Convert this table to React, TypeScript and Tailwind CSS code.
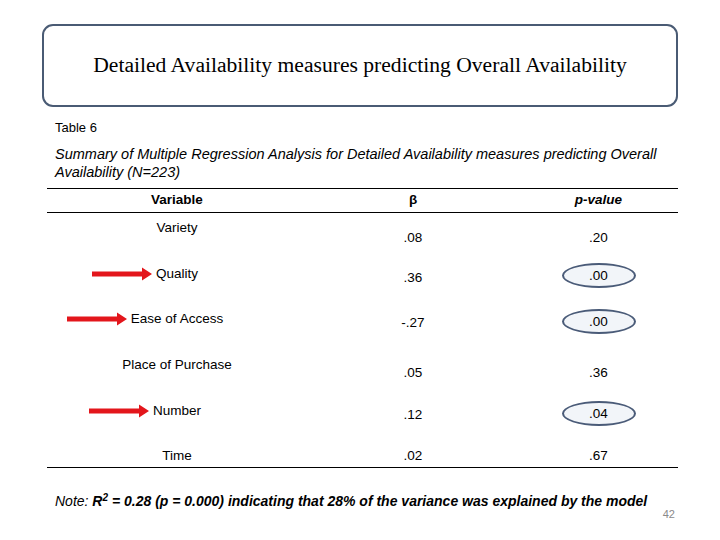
const rows = [
  { name: "Variety", beta: ".08", p: ".20", arrow: false, circled: false, h: "h-[46px]", lp: "pt-[6px]", vp: "pt-[16px]" },
  { name: "Quality", beta: ".36", p: ".00", arrow: true, circled: true, h: "h-[46px]", lp: "pt-[6px]", vp: "pt-[10px]" },
  { name: "Ease of Access", beta: "-.27", p: ".00", arrow: true, circled: true, h: "h-[46px]", lp: "pt-[5px]", vp: "pt-[9px]" },
  { name: "Place of Purchase", beta: ".05", p: ".36", arrow: false, circled: false, h: "h-[46px]", lp: "pt-[5px]", vp: "pt-[13px]" },
  { name: "Number", beta: ".12", p: ".04", arrow: true, circled: true, h: "h-[46px]", lp: "pt-[5px]", vp: "pt-[9px]" },
  { name: "Time", beta: ".02", p: ".67", arrow: false, circled: false, h: "h-[25px]", lp: "pt-[4px]", vp: "pt-[4px]" },
];

function Arrow() {
  return (
    <svg
      width="60"
      height="14"
      viewBox="0 0 60 14"
      className="absolute right-full top-[2px] mr-[4px] block"
    >
      <polygon points="0,4.5 50,4.5 50,0.5 60,7 50,13.5 50,9.5 0,9.5" fill="#e3161c" />
    </svg>
  );
}

export default function App() {
  return (
    <div className="relative h-[540px] w-[720px] overflow-hidden bg-white font-['Liberation_Sans',sans-serif] text-[13.5px] text-black">
      <div className="ml-[42px] mt-[24px] flex h-[83px] w-[636px] items-center justify-center rounded-[11px] border-2 border-[#4a5b74]">
        <h1 className="font-['Liberation_Serif',serif] text-[21.6px] leading-none">
          Detailed Availability measures predicting Overall Availability
        </h1>
      </div>

      <div className="ml-[55px] mt-[12px] text-[13px] leading-[18px]">Table 6</div>
      <p className="ml-[55px] mt-[8px] w-[623px] text-[14.5px] italic leading-[18px]">
        Summary of Multiple Regression Analysis for Detailed Availability measures predicting Overall
        Availability (N=223)
      </p>

      <div className="ml-[47px] mt-[7px] w-[631px]">
        <div className="grid h-[25px] grid-cols-[260px_212px_1fr] items-center border-y border-black font-bold">
          <div className="text-center">Variable</div>
          <div className="text-center">β</div>
          <div className="text-center italic">p-value</div>
        </div>
        {rows.map((r, i) => (
          <div
            key={r.name}
            className={`grid grid-cols-[260px_212px_1fr] ${r.h} ${i === rows.length - 1 ? "border-b border-black" : ""}`}
          >
            <div className={`flex justify-center ${r.lp}`}>
              <span className="relative inline-block h-[18px] leading-[18px]">
                {r.arrow && <Arrow />}
                {r.name}
              </span>
            </div>
            <div className={`text-center leading-[18px] ${r.vp}`}>{r.beta}</div>
            <div className={`flex justify-center ${r.circled ? "pt-[4px]" : r.vp}`}>
              {r.circled ? (
                <span className="flex h-[25px] w-[74px] items-center justify-center rounded-[50%] border-[2.5px] border-[#4a5b78] bg-[#f2f5f9] leading-[18px]">
                  {r.p}
                </span>
              ) : (
                <span className="leading-[18px]">{r.p}</span>
              )}
            </div>
          </div>
        ))}
      </div>

      <div className="ml-[55px] mt-[24px] flex w-[620px] items-start justify-between">
        <p className="text-[14px] font-bold italic leading-[18px]">
          <span className="font-normal">Note: </span>R<sup className="text-[10px]">2</sup> = 0.28 (p = 0.000) indicating that 28% of the variance was explained by the model
        </p>
        <span className="mt-[17px] text-[11px] leading-none text-[#8a8a8a]">42</span>
      </div>
    </div>
  );
}
